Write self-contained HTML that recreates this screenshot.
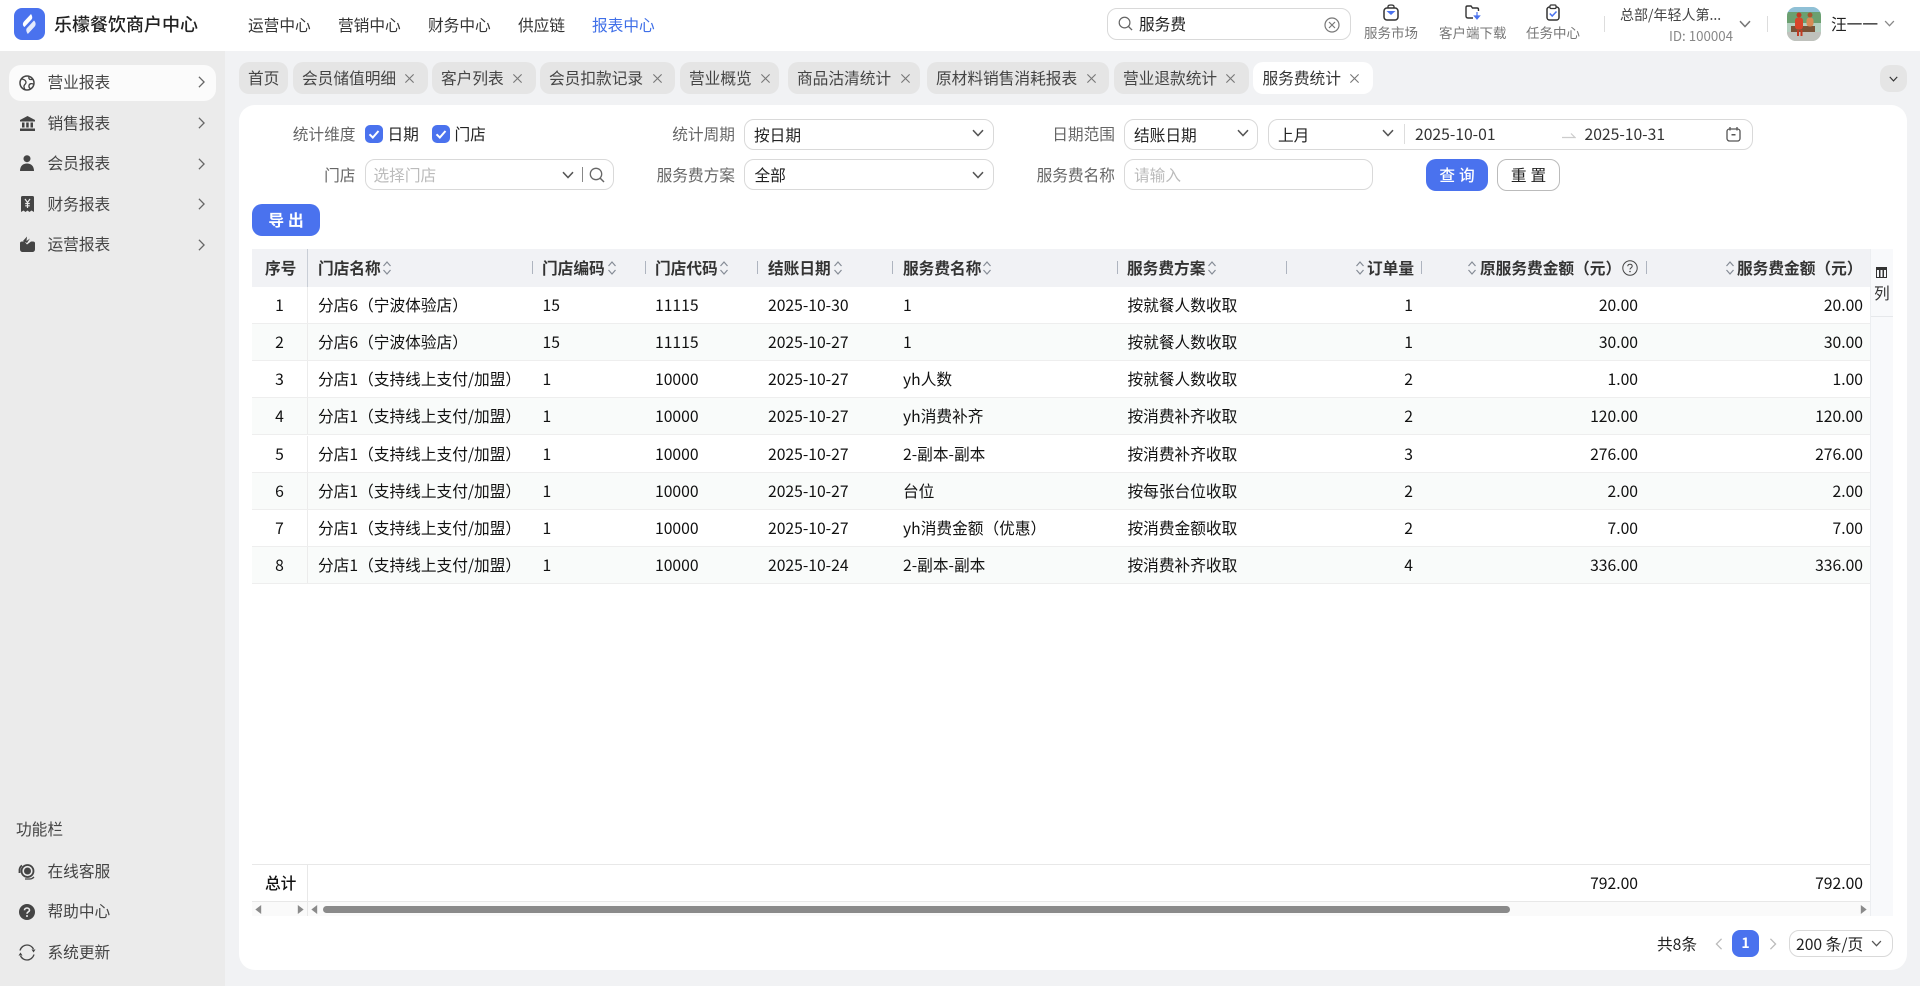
<!DOCTYPE html>
<html lang="zh-CN"><head><meta charset="utf-8"><title>服务费统计</title>
<style>
*{box-sizing:border-box;margin:0;padding:0}
html,body{width:1920px;height:986px;overflow:hidden;background:#f1f2f4;font-family:"Noto Sans CJK SC","Liberation Sans",sans-serif;font-size:15.7px;color:#222}
.a,.t,.b,svg.i{position:absolute}
.t{white-space:nowrap;line-height:20px;height:20px}
.nav{top:15px;color:#333}
.side{left:47.5px;color:#444}
.tab{position:absolute;top:62px;height:32px;line-height:31px;background:#e5e5e5;border-radius:10px;color:#444;padding-left:9px;white-space:nowrap}
.tab i{position:absolute;right:13px;top:11px;width:11px;height:11px}
.tab svg{display:block}
.lab{color:#666;text-align:right;width:120px}
.b{background:#fff;border:1px solid #d9d9d9;border-radius:10px}
.blue{background:#4a72ee;color:#fff;text-align:center;border-radius:10px;font-weight:700}
.r{position:absolute;left:252px;width:1618px;height:37px;border-bottom:1px solid #eee;background:#fff;line-height:36px;white-space:nowrap;color:#111}
.r.e{background:#f9fbfa}
.r b{font-weight:400;position:absolute;top:0}
.r .c0{left:0;width:55px;text-align:center}
.r .s{left:55px;top:0;width:1px;height:36px;background:#ececec}
.c1{left:66px}.c2{left:290.5px}.c3{left:403px}.c4{left:516px}.c5{left:651px}.c6{left:875.5px}
.c7{right:457px}.c8{right:232px}.c9{right:7px}
.h{font-weight:700;color:#333;top:258px}
.sep{position:absolute;top:261px;width:1px;height:13px;background:#aeb4bf}
.sm{color:#777;font-size:13.5px;top:22px}
</style></head><body>
<svg width="0" height="0" style="position:absolute">
<symbol id="dn" viewBox="0 0 12 8"><path d="M1 1.2 6 6.5 11 1.2" fill="none" stroke="currentColor" stroke-width="1.5"/></symbol>
<symbol id="rt" viewBox="0 0 8 14"><path d="M1 1 7 7 1 13" fill="none" stroke="currentColor" stroke-width="1.5"/></symbol>
<symbol id="x" viewBox="0 0 12 12"><path d="M1.5 1.5 10.5 10.5M10.5 1.5 1.5 10.5" fill="none" stroke="#777" stroke-width="1.2"/></symbol>
<symbol id="so" viewBox="0 0 10 16"><path d="M1.5 6 5 2 8.500 6M1.500 10 5 14 8.500 10" fill="none" stroke="#858b95" stroke-width="1.200"/></symbol>
<symbol id="ck" viewBox="0 0 18 18"><rect width="18" height="18" rx="5" fill="#4a72ee"/><path d="M4.500 9.300 7.800 12.500 13.500 6" fill="none" stroke="#fff" stroke-width="2"/></symbol>
<symbol id="sr" viewBox="0 0 16 16"><circle cx="7" cy="7" r="5.700" fill="none" stroke="#666" stroke-width="1.300"/><path d="M11 11 15 15" stroke="#666" stroke-width="1.500"/></symbol>
<symbol id="lt" viewBox="0 0 7 10"><path d="M6.500 0V10L0 5Z" fill="#8a8a8a"/></symbol>
<symbol id="gt" viewBox="0 0 7 10"><path d="M.5 0V10L7 5Z" fill="#8a8a8a"/></symbol>
</svg>

<!-- top bar -->
<div class="a" style="left:0;top:0;width:1920px;height:51px;background:#fff"></div>
<div class="a" style="left:14px;top:8px;width:31px;height:32px;background:#4a72ee;border-radius:8px"></div>
<svg class="i" style="left:21px;top:14px" width="17" height="20" viewBox="0 0 17 20"><path d="M10 0 3 7.500C1 10 2 12 3.500 13L10.500 5.500C12 4 11 1.500 10 0Z" fill="#fff"/><path d="M13 6.500 6 14C4.500 15.700 5.500 18 6.800 20L13.500 12.800C15.500 10.500 14.500 8 13 6.500Z" fill="#fff" opacity=".85"/></svg>
<span class="t" style="left:54px;top:14px;font-size:18px;font-weight:500;color:#222">乐檬餐饮商户中心</span>
<span class="t nav" style="left:248px">运营中心</span>
<span class="t nav" style="left:338px">营销中心</span>
<span class="t nav" style="left:428px">财务中心</span>
<span class="t nav" style="left:518px">供应链</span>
<span class="t nav" style="left:592px;color:#3f6fe8">报表中心</span>

<div class="b" style="left:1107px;top:8px;width:244px;height:32px"></div>
<svg class="i" style="left:1118px;top:16px" width="15" height="15"><use href="#sr"/></svg>
<span class="t" style="left:1139px;top:14px;color:#222">服务费</span>
<svg class="i" style="left:1324px;top:17px" width="16" height="16" viewBox="0 0 16 16"><circle cx="8" cy="8" r="7" fill="none" stroke="#777" stroke-width="1.200"/><path d="M5 5 11 11M11 5 5 11" stroke="#777" stroke-width="1.200"/></svg>

<svg class="i" style="left:1383px;top:4px" width="16" height="17" viewBox="0 0 16 17"><path d="M5 4V2.500C5 1.500 6 1 8 1S11 1.500 11 2.500V4" fill="none" stroke="#333" stroke-width="1.300"/><rect x="1" y="4" width="14" height="12" rx="3" fill="none" stroke="#333" stroke-width="1.500"/><path d="M3.500 7H12.500L8 11Z" fill="#4a72ee"/></svg>
<span class="t sm" style="left:1364px">服务市场</span>
<svg class="i" style="left:1464px;top:4px" width="18" height="17" viewBox="0 0 18 17"><path d="M9 14H4C2.500 14 2 13 2 12V3.500C2 2.500 2.500 2 3.500 2H7L8.500 4H13C14 4 14.500 4.500 14.500 5.500V7" fill="none" stroke="#333" stroke-width="1.400"/><path d="M13 8V14M10.500 12 13 15 15.500 12Z" stroke="#4a72ee" fill="#4a72ee" stroke-width="1.200"/></svg>
<span class="t sm" style="left:1439px">客户端下载</span>
<svg class="i" style="left:1546px;top:4px" width="14" height="17" viewBox="0 0 14 17"><rect x="1" y="3" width="12" height="13" rx="2.500" fill="none" stroke="#333" stroke-width="1.500"/><rect x="4" y="1" width="6" height="3.500" rx="1" fill="#fff" stroke="#333" stroke-width="1.200"/><path d="M3.800 9.500 6.200 12 10.500 7.500" fill="none" stroke="#4a72ee" stroke-width="1.500"/></svg>
<span class="t sm" style="left:1526px">任务中心</span>

<div class="a" style="left:1604px;top:16px;width:1px;height:16px;background:#ddd"></div>
<span class="t" style="left:1620px;top:5px;font-size:14px;color:#444">总部/年轻人第...</span>
<span class="t" style="left:1669px;top:26px;font-size:13.300px;color:#888">ID: 100004</span>
<svg class="i" style="left:1739px;top:20px;color:#777" width="12" height="8"><use href="#dn"/></svg>
<div class="a" style="left:1767px;top:16px;width:1px;height:16px;background:#ddd"></div>
<svg class="i" style="left:1787px;top:7px;border-radius:9px" width="34" height="34" viewBox="0 0 34 34"><rect width="34" height="34" fill="#b4cfc0"/><rect width="34" height="8" fill="#8fc0d6"/><rect y="5" width="34" height="11" fill="#6ba070"/><rect y="25" width="34" height="9" fill="#bfc1bc"/><rect x="4" y="19" width="24" height="6" fill="#7a5236"/><circle cx="12" cy="8" r="2.500" fill="#c23a22"/><rect x="8" y="10.500" width="8" height="12" rx="3" fill="#d8452a"/><circle cx="23" cy="8" r="2.500" fill="#a8552e"/><rect x="19.500" y="10.500" width="7" height="9" rx="3" fill="#d78a55"/><rect x="10" y="23" width="2" height="6" fill="#c23a22"/><rect x="13.500" y="23" width="2" height="6" fill="#c23a22"/></svg>
<span class="t" style="left:1831px;top:14px;color:#222">汪一一</span>
<svg class="i" style="left:1884px;top:20px;color:#888" width="11" height="7"><use href="#dn"/></svg>

<!-- sidebar -->
<div class="a" style="left:0;top:51px;width:225px;height:935px;background:#ebebeb"></div>
<div class="a" style="left:9px;top:65px;width:207px;height:36px;background:#fbfbfb;border-radius:12px"></div>
<span class="t side" style="top:72px">营业报表</span>
<span class="t side" style="top:113px">销售报表</span>
<span class="t side" style="top:153px">会员报表</span>
<span class="t side" style="top:194px">财务报表</span>
<span class="t side" style="top:234px">运营报表</span>
<svg class="i" style="left:198px;top:76px;color:#666" width="7" height="12"><use href="#rt"/></svg>
<svg class="i" style="left:198px;top:117px;color:#666" width="7" height="12"><use href="#rt"/></svg>
<svg class="i" style="left:198px;top:158px;color:#666" width="7" height="12"><use href="#rt"/></svg>
<svg class="i" style="left:198px;top:198px;color:#666" width="7" height="12"><use href="#rt"/></svg>
<svg class="i" style="left:198px;top:239px;color:#666" width="7" height="12"><use href="#rt"/></svg>
<svg class="i" style="left:19px;top:75px" width="16" height="16" viewBox="0 0 16 16"><circle cx="8" cy="8" r="7" fill="none" stroke="#444" stroke-width="1.500"/><path d="M2 4C5 4 7 5.500 7 7.500S4.500 9.500 5 12 6 14.500 6.500 15M10 1.500C9.500 3 10 4.500 11.500 4.500S14 4 14.500 5M15 9.500C13 8 10.500 8.500 10 10.500S11 13.500 11.500 14" fill="none" stroke="#444" stroke-width="1.300"/></svg>
<svg class="i" style="left:20px;top:116px" width="15" height="15" viewBox="0 0 15 15"><path d="M7.500 0 15 4V5.500H0V4Z" fill="#444"/><rect x="2" y="6.500" width="2.500" height="5" fill="#444"/><rect x="6.200" y="6.500" width="2.500" height="5" fill="#444"/><rect x="10.500" y="6.500" width="2.500" height="5" fill="#444"/><rect x="0" y="12.500" width="15" height="2.500" fill="#444"/></svg>
<svg class="i" style="left:20px;top:155px" width="14" height="16" viewBox="0 0 14 16"><circle cx="7" cy="3.700" r="3.500" fill="#444"/><path d="M0 16C0 11 3 8.500 7 8.500S14 11 14 16Z" fill="#444"/></svg>
<svg class="i" style="left:21px;top:196px" width="13" height="16" viewBox="0 0 13 16"><path d="M0 1.500C0 .5.500 0 1.500 0H11.500C12.500 0 13 .5 13 1.500V16L10.500 14.500 8.500 16 6.500 14.500 4.500 16 2.500 14.500 0 16Z" fill="#444"/><path d="M4 3 6.500 6.500 9 3M6.500 6.500V12M4.200 7.500H8.800M4.200 9.800H8.800" fill="none" stroke="#ebebeb" stroke-width="1.200"/></svg>
<svg class="i" style="left:20px;top:236px" width="15" height="16" viewBox="0 0 15 16"><path d="M0 7C0 6 1 5.500 2 5.500H4.500L7 8.500 11 5.500H13C14 5.500 15 6 15 7V13C15 15 14 16 12 16H3C1 16 0 15 0 13Z" fill="#444"/><path d="M3 5 7 .5 6.500 5 10 2.500 7 7Z" fill="#444"/></svg>

<span class="t" style="left:16px;top:819px;color:#444;font-size:15.7px">功能栏</span>
<span class="t side" style="top:861px">在线客服</span>
<span class="t side" style="top:901px">帮助中心</span>
<span class="t side" style="top:942px">系统更新</span>
<svg class="i" style="left:18px;top:863px" width="18" height="17" viewBox="0 0 18 17"><circle cx="9.500" cy="8" r="6" fill="none" stroke="#444" stroke-width="1.800"/><circle cx="9.500" cy="8" r="3.500" fill="#444"/><path d="M1.500 10V6.500C2 4 3 3 4 2.500" fill="none" stroke="#444" stroke-width="1.800"/><path d="M7 16H12C14 16 15 15 16 14" fill="none" stroke="#444" stroke-width="1.300"/></svg>
<svg class="i" style="left:19px;top:904px" width="16" height="16" viewBox="0 0 16 16"><circle cx="8" cy="8" r="8" fill="#444"/><path d="M5.500 6.200C5.500 4.800 6.700 4 8 4S10.500 4.800 10.500 6.200C10.500 7.800 8 7.800 8 9.800" fill="none" stroke="#ebebeb" stroke-width="1.600"/><circle cx="8" cy="12" r="1" fill="#ebebeb"/></svg>
<svg class="i" style="left:18px;top:944px" width="18" height="17" viewBox="0 0 18 17"><path d="M2 6.500C3 3 6 1 9 1S14 2.500 15.500 5M16 10.500C15 14 12 16 9 16S4 14.500 2.500 12" fill="none" stroke="#444" stroke-width="1.300"/><path d="M13.500 5.500H17.500L15.500 8.500ZM.5 11.500H4.500L2.500 8.500Z" fill="#444"/></svg>

<!-- tabs -->
<div class="tab" style="left:239px;width:49px">首页</div>
<div class="tab" style="left:293px;width:135px">会员储值明细<i style="right:13px"><svg width="11" height="11"><use href="#x"/></svg></i></div>
<div class="tab" style="left:432px;width:104px">客户列表<i style="right:13px"><svg width="11" height="11"><use href="#x"/></svg></i></div>
<div class="tab" style="left:540px;width:135px">会员扣款记录<i style="right:12.500px"><svg width="11" height="11"><use href="#x"/></svg></i></div>
<div class="tab" style="left:680px;width:99px">营业概览<i style="right:8.500px"><svg width="11" height="11"><use href="#x"/></svg></i></div>
<div class="tab" style="left:788px;width:132px">商品沽清统计<i style="right:9.500px"><svg width="11" height="11"><use href="#x"/></svg></i></div>
<div class="tab" style="left:927px;width:182px">原材料销售消耗报表<i style="right:12px"><svg width="11" height="11"><use href="#x"/></svg></i></div>
<div class="tab" style="left:1114px;width:135px">营业退款统计<i style="right:13px"><svg width="11" height="11"><use href="#x"/></svg></i></div>
<div class="tab" style="left:1253px;width:120px;background:#fff;color:#333;padding-left:9.500px">服务费统计<i style="right:13px"><svg width="11" height="11"><use href="#x"/></svg></i></div>
<div class="a" style="left:1880px;top:65px;width:27px;height:27px;background:#e5e5e5;border-radius:10px"></div>
<svg class="i" style="left:1889px;top:76px;color:#333" width="9" height="6"><use href="#dn"/></svg>

<!-- card -->
<div class="a" style="left:239px;top:105px;width:1668px;height:865px;background:#fff;border-radius:16px"></div>

<!-- form -->
<span class="t lab" style="left:235.500px;top:124px">统计维度</span>
<svg class="i" style="left:365px;top:125px" width="18" height="18"><use href="#ck"/></svg>
<span class="t" style="left:387.500px;top:124px">日期</span>
<svg class="i" style="left:432px;top:125px" width="18" height="18"><use href="#ck"/></svg>
<span class="t" style="left:454.500px;top:124px">门店</span>
<span class="t lab" style="left:235.500px;top:165px">门店</span>
<div class="b" style="left:365px;top:159px;width:249px;height:31px"></div>
<span class="t" style="left:373.500px;top:165px;color:#bbb">选择门店</span>
<svg class="i" style="left:562px;top:171px;color:#555" width="12" height="8"><use href="#dn"/></svg>
<div class="a" style="left:582px;top:167px;width:1px;height:15px;background:#888"></div>
<svg class="i" style="left:589px;top:167px" width="16" height="16"><use href="#sr"/></svg>

<span class="t lab" style="left:615px;top:124px">统计周期</span>
<div class="b" style="left:744px;top:119px;width:250px;height:31px"></div>
<span class="t" style="left:754px;top:125px">按日期</span>
<svg class="i" style="left:972px;top:129px;color:#555" width="12" height="8"><use href="#dn"/></svg>
<span class="t lab" style="left:615px;top:165px">服务费方案</span>
<div class="b" style="left:744px;top:159px;width:250px;height:31px"></div>
<span class="t" style="left:754.500px;top:165px">全部</span>
<svg class="i" style="left:972px;top:171px;color:#555" width="12" height="8"><use href="#dn"/></svg>

<span class="t lab" style="left:995px;top:124px">日期范围</span>
<div class="b" style="left:1124px;top:119px;width:134px;height:31px"></div>
<span class="t" style="left:1134px;top:125px">结账日期</span>
<svg class="i" style="left:1237px;top:129px;color:#555" width="12" height="8"><use href="#dn"/></svg>
<div class="b" style="left:1268px;top:119px;width:485px;height:31px"></div>
<span class="t" style="left:1278px;top:125px">上月</span>
<svg class="i" style="left:1382px;top:129px;color:#555" width="12" height="8"><use href="#dn"/></svg>
<div class="a" style="left:1404px;top:124px;width:1px;height:20px;background:#ddd"></div>
<span class="t" style="left:1415px;top:124px;color:#333">2025-10-01</span>
<svg class="i" style="left:1562px;top:131px" width="14" height="8" viewBox="0 0 14 8"><path d="M0 6.500H13L9 2.500" fill="none" stroke="#ccc" stroke-width="1.200"/></svg>
<span class="t" style="left:1584.500px;top:124px;color:#333">2025-10-31</span>
<svg class="i" style="left:1726px;top:126px" width="15" height="16" viewBox="0 0 15 16"><rect x="1" y="3" width="13" height="12" rx="2.500" fill="none" stroke="#555" stroke-width="1.300"/><path d="M4 1V4.500M11 1V4.500" stroke="#555" stroke-width="1.300"/><rect x="5.500" y="8" width="4" height="1.500" fill="#555"/></svg>
<span class="t lab" style="left:995px;top:165px">服务费名称</span>
<div class="b" style="left:1124px;top:159px;width:249px;height:31px"></div>
<span class="t" style="left:1134px;top:165px;color:#bbb">请输入</span>
<div class="a blue" style="left:1426px;top:159px;width:62px;height:32px;line-height:31px;letter-spacing:4px;padding-left:4px;font-weight:500">查询</div>
<div class="b" style="left:1497px;top:159px;width:63px;height:32px;line-height:29px;text-align:center;letter-spacing:4px;padding-left:4px;border-color:#bbb;color:#222">重置</div>
<div class="a blue" style="left:252px;top:204px;width:68px;height:32px;line-height:31px;letter-spacing:4px;padding-left:4px">导出</div>

<!-- table header -->
<div class="a" style="left:252px;top:249px;width:1618px;height:38px;background:#f1f2f5"></div>
<div class="a" style="left:307px;top:249px;width:1px;height:38px;background:#c9ced6"></div>
<span class="t h" style="left:265px">序号</span>
<span class="t h" style="left:318px">门店名称</span><svg class="i" style="left:382px;top:260px" width="10" height="16"><use href="#so"/></svg>
<div class="sep" style="left:532px"></div>
<span class="t h" style="left:542px">门店编码</span><svg class="i" style="left:607px;top:260px" width="10" height="16"><use href="#so"/></svg>
<div class="sep" style="left:645px"></div>
<span class="t h" style="left:655px">门店代码</span><svg class="i" style="left:719px;top:260px" width="10" height="16"><use href="#so"/></svg>
<div class="sep" style="left:757px"></div>
<span class="t h" style="left:768px">结账日期</span><svg class="i" style="left:833px;top:260px" width="10" height="16"><use href="#so"/></svg>
<div class="sep" style="left:892px"></div>
<span class="t h" style="left:903px">服务费名称</span><svg class="i" style="left:982px;top:260px" width="10" height="16"><use href="#so"/></svg>
<div class="sep" style="left:1117px"></div>
<span class="t h" style="left:1127px">服务费方案</span><svg class="i" style="left:1207px;top:260px" width="10" height="16"><use href="#so"/></svg>
<div class="sep" style="left:1286px"></div>
<svg class="i" style="left:1355px;top:260px" width="10" height="16"><use href="#so"/></svg><span class="t h" style="left:1367px">订单量</span>
<div class="sep" style="left:1421px"></div>
<svg class="i" style="left:1467px;top:260px" width="10" height="16"><use href="#so"/></svg><span class="t h" style="left:1480px">原服务费金额（元）</span>
<svg class="i" style="left:1622px;top:260px" width="16" height="16" viewBox="0 0 16 16"><circle cx="8" cy="8" r="7.200" fill="none" stroke="#444" stroke-width="1"/><path d="M5.800 6.300C5.800 5 6.800 4.300 8 4.300S10.200 5 10.200 6.300C10.200 7.800 8 7.800 8 9.500" fill="none" stroke="#444"/><circle cx="8" cy="11.500" r=".8" fill="#444"/></svg>
<div class="sep" style="left:1646px"></div>
<svg class="i" style="left:1725px;top:260px" width="10" height="16"><use href="#so"/></svg><span class="t h" style="left:1737px">服务费金额（元）</span>

<!-- rows -->
<div class="r" style="top:287px"><b class="c0">1</b><i class="a s"></i><b class="c1">分店6（宁波体验店）</b><b class="c2">15</b><b class="c3">11115</b><b class="c4">2025-10-30</b><b class="c5">1</b><b class="c6">按就餐人数收取</b><b class="c7">1</b><b class="c8">20.00</b><b class="c9">20.00</b></div>
<div class="r e" style="top:324px"><b class="c0">2</b><i class="a s"></i><b class="c1">分店6（宁波体验店）</b><b class="c2">15</b><b class="c3">11115</b><b class="c4">2025-10-27</b><b class="c5">1</b><b class="c6">按就餐人数收取</b><b class="c7">1</b><b class="c8">30.00</b><b class="c9">30.00</b></div>
<div class="r" style="top:361px"><b class="c0">3</b><i class="a s"></i><b class="c1">分店1（支持线上支付/加盟）</b><b class="c2">1</b><b class="c3">10000</b><b class="c4">2025-10-27</b><b class="c5">yh人数</b><b class="c6">按就餐人数收取</b><b class="c7">2</b><b class="c8">1.00</b><b class="c9">1.00</b></div>
<div class="r e" style="top:398px"><b class="c0">4</b><i class="a s"></i><b class="c1">分店1（支持线上支付/加盟）</b><b class="c2">1</b><b class="c3">10000</b><b class="c4">2025-10-27</b><b class="c5">yh消费补齐</b><b class="c6">按消费补齐收取</b><b class="c7">2</b><b class="c8">120.00</b><b class="c9">120.00</b></div>
<div class="r" style="top:436px"><b class="c0">5</b><i class="a s"></i><b class="c1">分店1（支持线上支付/加盟）</b><b class="c2">1</b><b class="c3">10000</b><b class="c4">2025-10-27</b><b class="c5">2-副本-副本</b><b class="c6">按消费补齐收取</b><b class="c7">3</b><b class="c8">276.00</b><b class="c9">276.00</b></div>
<div class="r e" style="top:473px"><b class="c0">6</b><i class="a s"></i><b class="c1">分店1（支持线上支付/加盟）</b><b class="c2">1</b><b class="c3">10000</b><b class="c4">2025-10-27</b><b class="c5">台位</b><b class="c6">按每张台位收取</b><b class="c7">2</b><b class="c8">2.00</b><b class="c9">2.00</b></div>
<div class="r" style="top:510px"><b class="c0">7</b><i class="a s"></i><b class="c1">分店1（支持线上支付/加盟）</b><b class="c2">1</b><b class="c3">10000</b><b class="c4">2025-10-27</b><b class="c5">yh消费金额（优惠）</b><b class="c6">按消费金额收取</b><b class="c7">2</b><b class="c8">7.00</b><b class="c9">7.00</b></div>
<div class="r e" style="top:547px"><b class="c0">8</b><i class="a s"></i><b class="c1">分店1（支持线上支付/加盟）</b><b class="c2">1</b><b class="c3">10000</b><b class="c4">2025-10-24</b><b class="c5">2-副本-副本</b><b class="c6">按消费补齐收取</b><b class="c7">4</b><b class="c8">336.00</b><b class="c9">336.00</b></div>

<!-- column button -->
<div class="a" style="left:1870px;top:249px;width:23px;height:667px;background:#f8f9fb;border-left:1px solid #eceef1"></div>
<svg class="i" style="left:1876px;top:267px" width="11" height="11" viewBox="0 0 11 11"><path d="M0 0H11V11H0ZM1 3V10H3V3ZM4.500 3V10H6.500V3ZM8 3V10H10V3Z" fill="#333" fill-rule="evenodd"/></svg>
<span class="t" style="left:1874px;top:283px;color:#333">列</span>
<div class="a" style="left:1871px;top:316px;width:22px;height:1px;background:#e6e8eb"></div>

<!-- total -->
<div class="a" style="left:252px;top:864px;width:1618px;height:1px;background:#e8e8e8"></div>
<div class="a" style="left:252px;top:901px;width:1618px;height:15px;background:#fafafa;border-top:1px solid #e8e8e8"></div>
<div class="a" style="left:307px;top:865px;width:1px;height:51px;background:#e8e8e8"></div>
<span class="t" style="left:265px;top:873px;font-weight:500;color:#111">总计</span>
<span class="t" style="left:1590px;top:873px;width:48px;text-align:right;color:#111">792.00</span>
<span class="t" style="left:1815px;top:873px;width:48px;text-align:right;color:#111">792.00</span>
<svg class="i" style="left:255px;top:905px" width="7" height="9"><use href="#lt"/></svg>
<svg class="i" style="left:297px;top:905px" width="7" height="9"><use href="#gt"/></svg>
<svg class="i" style="left:311px;top:905px" width="7" height="9"><use href="#lt"/></svg>
<svg class="i" style="left:1860px;top:905px" width="7" height="9"><use href="#gt"/></svg>
<div class="a" style="left:323px;top:906px;width:1187px;height:7px;background:#8a8a8a;border-radius:4px"></div>

<!-- pagination -->
<span class="t" style="left:1657px;top:934px;color:#222">共8条</span>
<svg class="i" style="left:1715px;top:938px;color:#bbb" width="8" height="12"><use href="#rt" transform="matrix(-1 0 0 1 8 0)"/></svg>
<div class="a blue" style="left:1732px;top:930px;width:27px;height:27px;line-height:26px;border-radius:8px;font-size:14px">1</div>
<svg class="i" style="left:1769px;top:938px;color:#bbb" width="8" height="12"><use href="#rt"/></svg>
<div class="b" style="left:1789px;top:930px;width:104px;height:27px"></div>
<span class="t" style="left:1796px;top:934px;color:#222">200 条/页</span>
<svg class="i" style="left:1871px;top:940px;color:#555" width="11" height="7"><use href="#dn"/></svg>
</body></html>
